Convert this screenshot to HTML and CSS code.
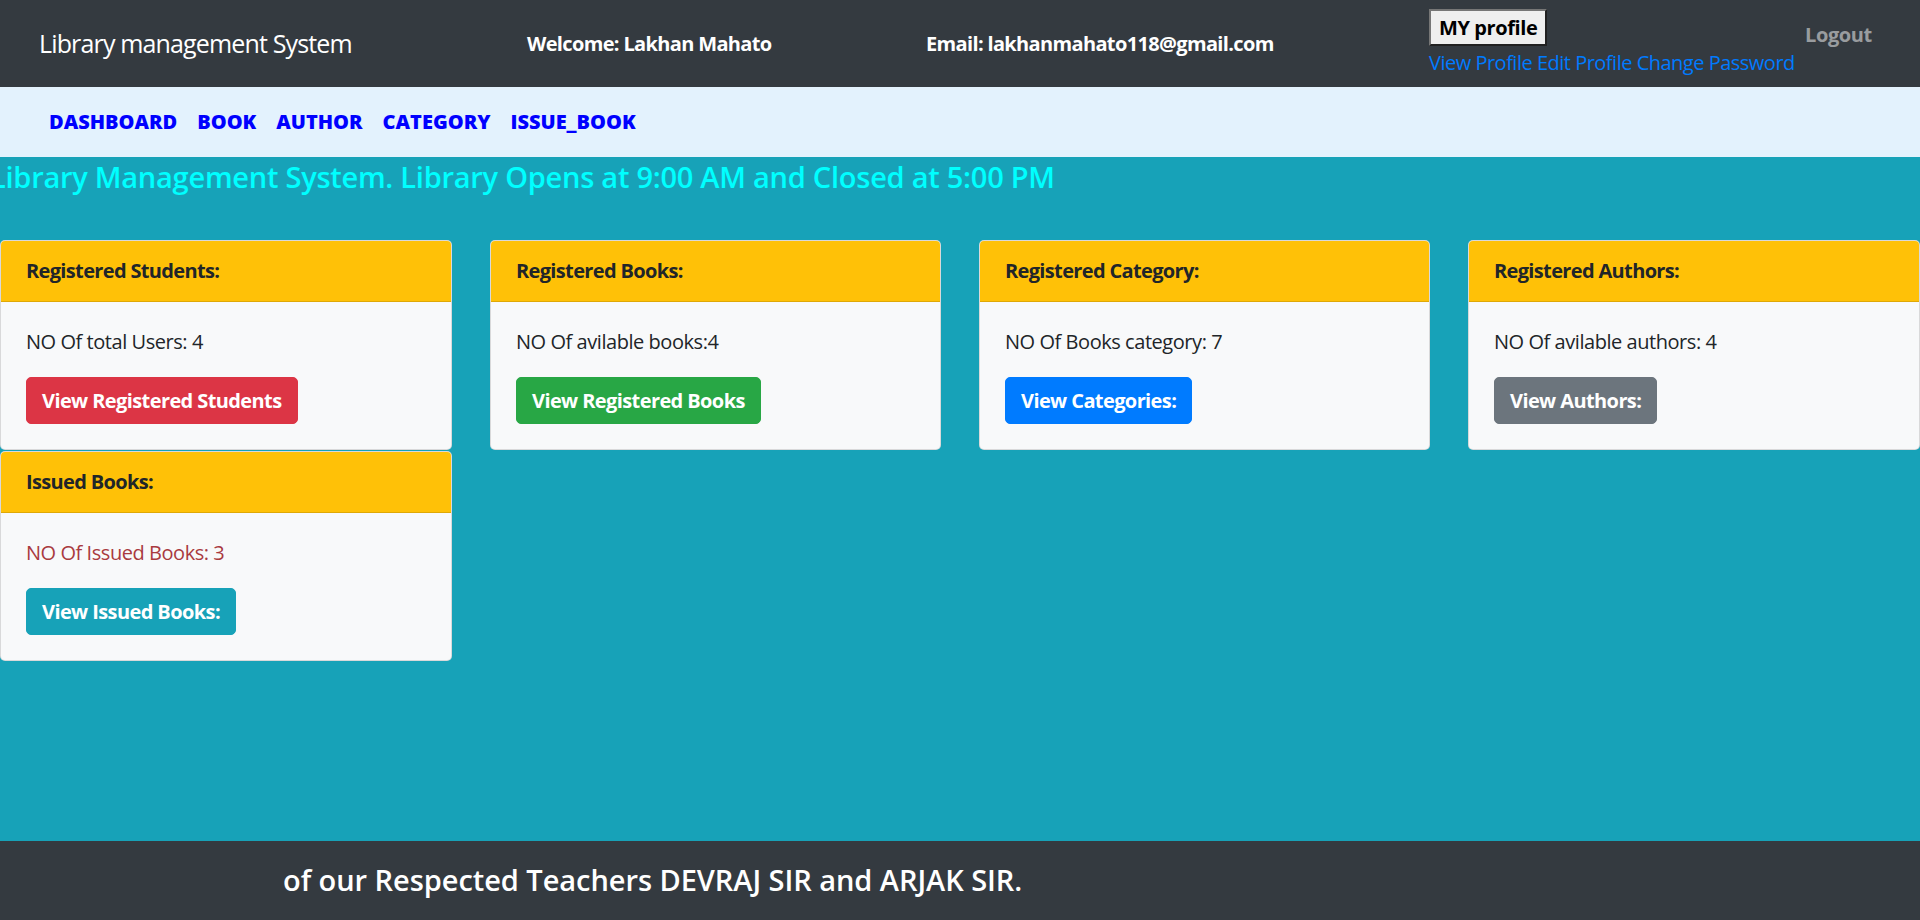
FILE: index.html
```html
<!DOCTYPE html>
<html lang="en">
<head>
<meta charset="utf-8">
<title>Library management System</title>
<link rel="stylesheet" href="styles.css">
</head>
<body>
<div class="page">
  <header class="topbar">
    <a class="brand" href="#">Library management System</a>
    <span class="welcome">Welcome: Lakhan Mahato</span>
    <span class="email">Email: lakhanmahato118@gmail.com</span>
    <div class="profile">
      <button class="profile-btn" type="button">MY profile</button>
      <div class="profile-links">
        <a href="#">View Profile</a> <a href="#">Edit Profile</a> <a href="#">Change Password</a>
      </div>
    </div>
    <a class="logout" href="#">Logout</a>
  </header>

  <nav class="subnav">
    <a href="#">DASHBOARD</a>
    <a href="#">BOOK</a>
    <a href="#">AUTHOR</a>
    <a href="#">CATEGORY</a>
    <a href="#">ISSUE_BOOK</a>
  </nav>

  <main class="main">
    <div class="marquee"><span class="marquee-text">Library Management System. Library Opens at 9:00 AM and Closed at 5:00 PM</span></div>

    <div class="cards">
      <div class="card">
        <div class="card-header">Registered Students:</div>
        <div class="card-body">
          <p class="card-text">NO Of total Users: 4</p>
          <a class="btn btn-danger" href="#">View Registered Students</a>
        </div>
      </div>
      <div class="card">
        <div class="card-header">Registered Books:</div>
        <div class="card-body">
          <p class="card-text">NO Of avilable books:4</p>
          <a class="btn btn-success" href="#">View Registered Books</a>
        </div>
      </div>
      <div class="card">
        <div class="card-header">Registered Category:</div>
        <div class="card-body">
          <p class="card-text">NO Of Books category: 7</p>
          <a class="btn btn-primary" href="#">View Categories:</a>
        </div>
      </div>
      <div class="card">
        <div class="card-header">Registered Authors:</div>
        <div class="card-body">
          <p class="card-text">NO Of avilable authors: 4</p>
          <a class="btn btn-secondary" href="#">View Authors:</a>
        </div>
      </div>
      <div class="card">
        <div class="card-header">Issued Books:</div>
        <div class="card-body">
          <p class="card-text text-brown">NO Of Issued Books: 3</p>
          <a class="btn btn-info" href="#">View Issued Books:</a>
        </div>
      </div>
    </div>
  </main>

  <footer class="footer">
    <div class="footer-marquee"><span class="footer-text">of our Respected Teachers DEVRAJ SIR and ARJAK SIR.</span></div>
  </footer>
</div>
</body>
</html>
```

FILE: styles.css
```css
* { box-sizing: border-box; }

html, body {
  margin: 0;
  padding: 0;
}

body {
  font-family: "Open Sans", "Noto Sans", sans-serif;
  font-size: 20px;
  line-height: 1.5;
  letter-spacing: -0.5px;
  color: #212529;
  background: #17a2b8;
}

a { text-decoration: none; }

.page {
  display: flex;
  flex-direction: column;
  height: 920px;
  overflow: hidden;
}

/* ---------- top bar ---------- */
.topbar {
  height: 87px;
  flex: none;
  background: #343a40;
  display: flex;
  align-items: center;
  padding-left: 39px;
}

.brand {
  width: 488px;
  color: #fff;
  font-size: 25px;
  line-height: 1.5;
  letter-spacing: -0.85px;
  white-space: nowrap;
}

.welcome {
  width: 399px;
  color: #fff;
  font-weight: 700;
  letter-spacing: -0.65px;
  white-space: nowrap;
}

.email {
  width: 503px;
  color: #fff;
  font-weight: 700;
  letter-spacing: -0.65px;
  white-space: nowrap;
}

.profile {
  width: 376px;
  align-self: flex-start;
  margin-top: 9px;
  display: flex;
  flex-direction: column;
  align-items: flex-start;
}

.profile-btn {
  font-family: inherit;
  font-size: 20px;
  font-weight: 700;
  line-height: 27px;
  letter-spacing: -0.4px;
  color: #000;
  background: #efefef;
  border: 2px outset #767676;
  padding: 3px 8px;
  margin: 0;
}

.profile-links {
  white-space: nowrap;
  line-height: 30px;
  margin-top: 2px;
}

.profile-links a { color: #007bff; }

.logout {
  align-self: flex-start;
  margin-top: 20px;
  color: rgba(255, 255, 255, 0.5);
  font-weight: 700;
  letter-spacing: -0.4px;
}

/* ---------- sub nav ---------- */
.subnav {
  height: 70px;
  flex: none;
  background: #e3f2fd;
  display: flex;
  align-items: center;
  padding-left: 39px;
}

.subnav a {
  color: #0000ff;
  font-weight: 800;
  letter-spacing: 0;
  padding: 0 10px;
}

/* ---------- main ---------- */
.main {
  flex: 1;
  background: #17a2b8;
}

.marquee {
  overflow: hidden;
  white-space: nowrap;
  height: 38px;
  padding-top: 2px;
}

.marquee-text {
  display: inline-block;
  margin-left: -10px;
  color: #00ffff;
  font-size: 29px;
  font-weight: 600;
  letter-spacing: -0.25px;
  line-height: 36px;
}

.cards {
  margin-top: 45px;
  display: grid;
  grid-template-columns: 452px 451px 451px 1fr;
  column-gap: 38px;
  row-gap: 1px;
  align-items: start;
}

.card {
  background: #f8f9fa;
  border: 1px solid rgba(0, 0, 0, 0.125);
  border-radius: 5px;
  overflow: hidden;
}

.card-header {
  background: #ffc107;
  border-bottom: 1px solid rgba(0, 0, 0, 0.125);
  padding: 15px 25px;
  font-weight: 700;
  letter-spacing: -0.65px;
  line-height: 30px;
}

.card-body {
  padding: 25px;
}

.card-text {
  margin: 0 0 20px;
  line-height: 30px;
  letter-spacing: -0.45px;
}

.text-brown { color: #a93a3f; }

.btn {
  display: inline-block;
  font-weight: 700;
  letter-spacing: -0.6px;
  color: #fff;
  line-height: 30px;
  padding: 7.5px 15px;
  border: 1px solid transparent;
  border-radius: 5px;
}

.btn-danger { background: #dc3545; border-color: #dc3545; }
.btn-success { background: #28a745; border-color: #28a745; }
.btn-primary { background: #007bff; border-color: #007bff; }
.btn-secondary { background: #6c757d; border-color: #6c757d; }
.btn-info { background: #17a2b8; border-color: #17a2b8; }

/* ---------- footer ---------- */
.footer {
  height: 79px;
  flex: none;
  background: #343a40;
  display: flex;
  align-items: center;
  padding-left: 274px;
}

.footer-marquee {
  overflow: hidden;
  white-space: nowrap;
  flex: 1;
}

.footer-text {
  display: inline-block;
  padding-left: 9px;
  color: #fff;
  font-size: 29px;
  font-weight: 600;
  letter-spacing: -0.05px;
  line-height: 1.2;
}
```
